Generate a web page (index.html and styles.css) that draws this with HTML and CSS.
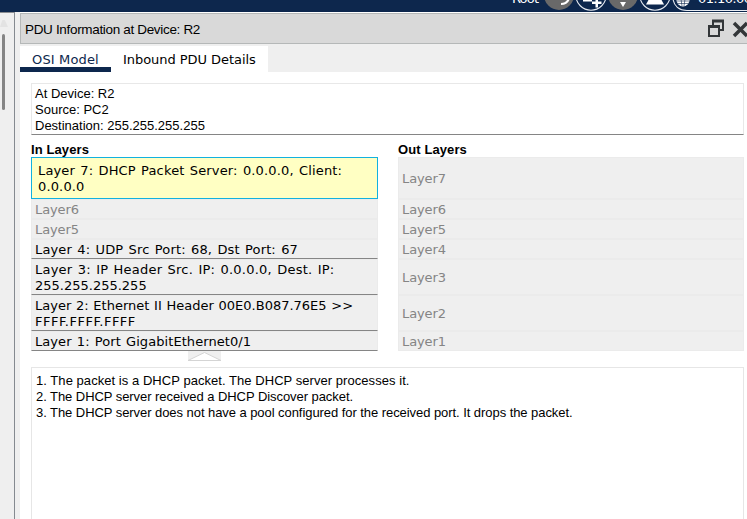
FILE: index.html
```html
<!DOCTYPE html>
<html lang="en">
<head>
<meta charset="utf-8">
<title>PDU Information</title>
<link rel="stylesheet" href="styles.css">
</head>
<body>
<header class="topbar">
  <svg width="247" height="12" viewBox="0 0 247 12">
    <text class="bar-text" x="12" y="3" textLength="27">Root</text>
    <circle cx="59" cy="-5" r="15" fill="#696969"/>
    <path d="M61 4c4 0 7-2 8-6" fill="none" stroke="#fff" stroke-width="2.2"/>
    <g fill="#0d274d" stroke="#e8ecf2" stroke-width="1.1">
      <circle cx="91" cy="-5" r="15.2"/>
      <circle cx="155" cy="-5" r="15.2"/>
      <path d="M173-1c1 7 6 11.500 14 11.500H247"/>
    </g>
    <path d="M83-1h9v2.500h-9zM92 1.500h3.500v-3.500h2.500v3.500h3.500v2.500h-3.500v3.500h-2.500V4H92z" fill="#fff"/>
    <circle cx="123" cy="-5" r="15" fill="#696969"/>
    <path d="M120 2h6l-3 5z" fill="#fff"/>
    <path d="M149-1h12l3 5.500h-18z" fill="#fff"/>
    <circle cx="183" cy="0" r="6.500" fill="#fff"/>
    <path d="M177 1h12M178 3.500h10M181-1l1 7M185-1l-1 7" stroke="#0d274d" stroke-width=".6"/>
    <text class="bar-text" x="198" y="3" textLength="54">01:10:00</text>
  </svg>
</header>
<div class="workspace">
  <aside class="scroll-strip"><span class="arrow"></span><span class="thumb"></span></aside>
  <main class="panel">
    <div class="titlebar">
      <span class="title">PDU Information at Device: R2</span>
      <svg class="window-icons" width="40" height="20" viewBox="0 0 40 20">
        <path d="M6 6V2h10v9h-4M2 8h10v9H2z" fill="none" stroke="#333638" stroke-width="2"/>
        <path d="M1 7.500h12M5 2h12" stroke="#333638" stroke-width="3"/>
        <path d="M27 4l13 13M40 4l-13 13" stroke="#333638" stroke-width="3.500"/>
      </svg>
    </div>
    <nav class="tabs"><a class="tab active">OSI Model</a><a class="tab">Inbound PDU Details</a></nav>
    <section class="content">
      <div class="summary">At Device: R2<br>Source: PC2<br>Destination: 255.255.255.255</div>
      <div class="columns">
        <div class="column">
          <h2>In Layers</h2>
          <div class="layer selected">Layer 7: DHCP Packet Server: 0.0.0.0, Client:<br>0.0.0.0</div>
          <div class="layer off">Layer6</div>
          <div class="layer off">Layer5</div>
          <div class="layer used">Layer 4: UDP Src Port: 68, Dst Port: 67</div>
          <div class="layer used tall ip">Layer 3: IP Header Src. IP: 0.0.0.0, Dest. IP:<br><span class="address">255.255.255.255</span></div>
          <div class="layer used tall ethernet">Layer 2: Ethernet II Header 00E0.B087.76E5 &gt;&gt;<br><span class="mac">FFFF.FFFF.FFFF</span></div>
          <div class="layer used port">Layer 1: Port GigabitEthernet0/1</div>
        </div>
        <div class="column">
          <h2>Out Layers</h2>
          <div class="layer off top">Layer7</div>
          <div class="layer off">Layer6</div>
          <div class="layer off">Layer5</div>
          <div class="layer off">Layer4</div>
          <div class="layer off tall">Layer3</div>
          <div class="layer off tall">Layer2</div>
          <div class="layer off">Layer1</div>
        </div>
      </div>
      <div class="splitter">
        <svg width="33" height="10" viewBox="0 0 33 10"><path d="M0 0h33v10H0z" fill="#efefef"/><path d="M0 9.500L16.500 1.500 33 9.500z" fill="#fff" stroke="#d4d4d4"/></svg>
      </div>
      <div class="details">
        <div class="step wide">1. The packet is a DHCP packet. The DHCP server processes it.</div>
        <div class="step">2. The DHCP server received a DHCP Discover packet.</div>
        <div class="step">3. The DHCP server does not have a pool configured for the received port. It drops the packet.</div>
      </div>
    </section>
  </main>
</div>
</body>
</html>
```
FILE: styles.css
```css
* { box-sizing: border-box; }
body { margin: 0; height: 519px; overflow: hidden; display: flex; flex-direction: column; background: #efefef; color: #000; font: 13px/16px "Liberation Sans", Arial, sans-serif; }
.topbar { height: 12px; flex: none; background: #0d274d; display: flex; justify-content: flex-end; }
.topbar svg { display: block; }
.bar-text { font: 13px "DejaVu Sans", sans-serif; fill: #fff; }
.workspace { flex: 1; display: flex; min-height: 0; }
.scroll-strip { width: 15px; flex: none; border-top: 1px solid #8a8d91; border-right: 1px solid #858a90; display: flex; flex-direction: column; }
.arrow { width: 8px; height: 7px; margin-top: 7px; background: #e3e3e3; clip-path: polygon(0 100%, 30% 0, 60% 0, 100% 100%); }
.thumb { width: 3px; height: 76px; margin: 7px 0 0 2px; border-radius: 2px; background: #858585; }
.panel { flex: 1; margin-left: 5px; display: flex; flex-direction: column; min-width: 0; border-top: 1px solid #fff; }
.titlebar { height: 31px; flex: none; display: flex; align-items: center; justify-content: space-between; padding-left: 4px; background: #d9d9d9; border: 1px solid #b5b8b8; border-right: 0; }
.title { padding-top: 2px; font-size: 13.5px; letter-spacing: -.33px; }
.tabs { height: 26px; margin-top: 2px; flex: none; display: flex; font: 13px/27px "DejaVu Sans", sans-serif; }
.tab { background: #fff; padding: 0 12px; letter-spacing: -.05px; }
.tab.active { width: 91px; color: #0d274d; border-bottom: 5px solid #0d274d; letter-spacing: .15px; }
.content { flex: 1; background: #fff; padding: 11px 3px 0 11px; display: flex; flex-direction: column; min-height: 0; }
.summary { height: 52px; flex: none; border: 1px solid #e8e8e8; border-bottom-color: #858585; padding: 2px 3px; }
.columns { display: grid; grid-template-columns: 347px 346px; column-gap: 20px; margin-top: 7px; }
h2 { margin: 0; height: 15px; font-size: 13px; line-height: 16px; letter-spacing: .1px; }
.layer { height: 20px; padding: 2px 3px; background: #efefef; border: 1px solid #ebebeb; font: 13px/16px "DejaVu Sans", sans-serif; white-space: nowrap; letter-spacing: .15px; word-spacing: 1px; }
.layer.off { padding: 2px 3px 0; color: #858585; display: flex; align-items: center; letter-spacing: -.1px; }
.layer.used { border-bottom-color: #858585; }
.layer.ip { letter-spacing: .22px; }
.layer.ethernet { letter-spacing: 0; word-spacing: .6px; }
.layer.port { letter-spacing: .07px; }
.address { letter-spacing: 0; }
.mac { letter-spacing: .5px; }
.layer.tall { height: 36px; }
.layer.top { height: 42px; }
.layer.selected { height: 42px; padding: 5px 6px; background: #ffffc3; border-color: #12b1df; }
.splitter { height: 16px; flex: none; padding-left: 157px; }
.splitter svg { display: block; }
.details { flex: 1; border: 1px solid #e6e6e6; border-bottom: 0; padding: 5px 4px; }
.step { letter-spacing: -.06px; }
.step.wide { letter-spacing: .05px; }
```
